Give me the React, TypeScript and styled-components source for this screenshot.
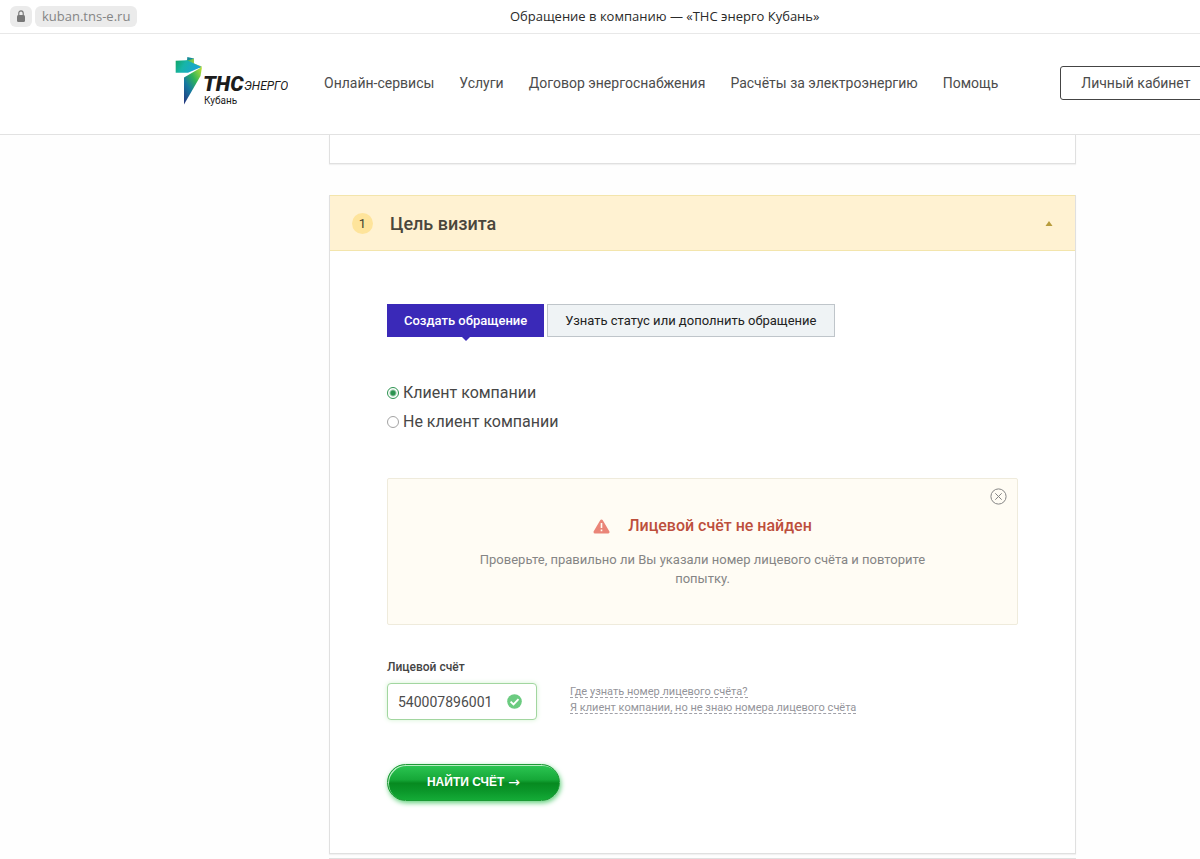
import React, { useState } from "react";
import styled, { createGlobalStyle, css } from "styled-components";

const GlobalStyle = createGlobalStyle`
  *, *::before, *::after { box-sizing: border-box; }
  body {
    margin: 0;
    background: #fefefe;
    color: #474747;
    font-family: Roboto, "Liberation Sans", sans-serif;
    font-size: 14px;
    overflow-x: hidden;
  }
  button, input { font-family: inherit; }
`;

const AddressBar = styled.div`
  display: flex;
  align-items: center;
  gap: 3px;
  height: 34px;
  padding: 0 8px 1px 10px;
  border-bottom: 1px solid #e8e8e8;
  background: #fff;
`;

const AddressChip = styled.span`
  display: flex;
  align-items: center;
  height: 21px;
  padding: 0 7px;
  border-radius: 6px;
  background: #ebebeb;
  color: #858585;
  font: 13px/21px "Open Sans", sans-serif;
`;

const PageTitle = styled.div`
  flex: 1;
  padding-right: 3px;
  text-align: center;
  color: #2a2a2a;
  font: 13px/20px "Open Sans", sans-serif;
`;

const Header = styled.header`
  display: flex;
  align-items: center;
  height: 101px;
  padding: 0 0 2px 175px;
  border-bottom: 1px solid #e2e2e2;
  background: #fff;
  overflow: hidden;
`;

const LogoLink = styled.a`
  flex: none;
  display: block;
  height: 52px;
  margin-right: 36px;
`;

const Nav = styled.nav`
  flex: none;
  display: flex;
  gap: 25px;
  margin-right: 62px;
`;

const NavLink = styled.a`
  color: #4c4c4c;
  font-size: 14px;
  line-height: 20px;
  text-decoration: none;
  white-space: nowrap;
`;

const AccountButton = styled.button`
  flex: none;
  height: 34px;
  padding: 0 20px;
  border: 1px solid #444;
  border-radius: 3px;
  background: #fff;
  color: #4c4c4c;
  font-size: 14px;
  white-space: nowrap;
`;

const Main = styled.main`
  padding: 0 124px 0 329px;
`;

const panel = css`
  border: 1px solid #e0e0e0;
  background: #fff;
  box-shadow: 0 1px 1px rgba(0, 0, 0, 0.05);
`;

const PreviousPanel = styled.div`
  ${panel}
  height: 29px;
  margin-bottom: 31px;
  border-top: 0;
`;

const StepCard = styled.section`
  ${panel}
  margin-bottom: 4px;
  border-top: 0;
`;

const NextPanel = styled.div`
  border-top: 1px solid #e0e0e0;
`;

const StepHeader = styled.button`
  display: flex;
  align-items: center;
  width: 100%;
  height: 56px;
  padding: 0 22px;
  border: 0;
  border-top: 1px solid #f3e5ac;
  border-bottom: 1px solid #f3e5ac;
  background: #fff2d2;
  text-align: left;
`;

const StepNumber = styled.span`
  width: 21px;
  height: 21px;
  margin-right: 17px;
  border-radius: 50%;
  background: #fee49b;
  color: #443f2f;
  font-size: 13px;
  line-height: 21px;
  text-align: center;
`;

const StepTitle = styled.span`
  flex: 1;
  padding-top: 2px;
  color: #4a463c;
  font-size: 18px;
  font-weight: 500;
  line-height: 24px;
`;

const StepBody = styled.form`
  padding: 53px 57px 52px;
`;

const Tabs = styled.div`
  display: flex;
  gap: 3px;
  margin-bottom: 46px;
`;

const Tab = styled.button<{ $active?: boolean }>`
  position: relative;
  height: 33px;
  padding: 0 17px;
  border: 1px solid #bfc5ca;
  background: #eff3f5;
  color: #222;
  font-size: 13px;
  white-space: nowrap;
  ${(p) =>
    p.$active &&
    css`
      padding: 0 16px;
      border-color: #3a29b8;
      background: #3a29b8;
      color: #fff;
      font-weight: 500;
      &::after {
        content: "";
        position: absolute;
        top: 100%;
        left: 50%;
        margin-left: -5px;
        border: 5px solid transparent;
        border-top-color: #3a29b8;
        border-bottom: 0;
      }
    `}
`;

const RadioList = styled.div`
  display: flex;
  flex-direction: column;
  gap: 9px;
  margin-bottom: 46px;
`;

const RadioLabel = styled.label`
  display: flex;
  align-items: center;
  gap: 4px;
  font-size: 16px;
  line-height: 20px;
`;

const Radio = styled.input`
  appearance: none;
  width: 12px;
  height: 12px;
  margin: 0;
  border: 1px solid #a3a3a3;
  border-radius: 50%;
  background: #fff;
  &:checked {
    border-color: #2c9350;
    background: radial-gradient(circle, #2c9350 0 2px, #fff 4px);
  }
`;

const Alert = styled.div`
  position: relative;
  height: 147px;
  margin-bottom: 33px;
  padding: 36px 84px 0;
  border: 1px solid #efebdc;
  border-radius: 2px;
  background: #fffcf4;
  text-align: center;
`;

const AlertClose = styled.button`
  position: absolute;
  top: 9px;
  right: 10px;
  width: 17px;
  height: 17px;
  padding: 0;
  border: 0;
  background: none;
  svg { display: block; }
`;

const AlertTitle = styled.h2`
  display: flex;
  align-items: center;
  justify-content: center;
  gap: 18px;
  margin: 0 0 13px;
  color: #bd4f3c;
  font-size: 16px;
  font-weight: 500;
  line-height: 22px;
`;

const AlertText = styled.p`
  margin: 0;
  color: #858585;
  font-size: 13px;
  line-height: 19px;
`;

const FieldLabel = styled.label`
  display: block;
  margin-bottom: 6px;
  color: #444;
  font-size: 12px;
  font-weight: 500;
  line-height: 19px;
`;

const FieldRow = styled.div`
  display: flex;
  align-items: center;
  gap: 33px;
  margin-bottom: 44px;
`;

const AccountBox = styled.div`
  display: flex;
  align-items: center;
  width: 150px;
  height: 37px;
  padding: 0 14px 0 10px;
  border: 1px solid #a2d6a0;
  border-radius: 4px;
  background: #fff;
  box-shadow: 0 0 5px #d5f3d3;
`;

const AccountInput = styled.input`
  flex: 1;
  min-width: 0;
  padding: 0;
  border: 0;
  outline: 0;
  background: none;
  color: #4c4c4c;
  font-size: 14px;
`;

const Hints = styled.div`
  display: flex;
  flex-direction: column;
  align-items: flex-start;
  gap: 3px;
  padding-bottom: 4px;
`;

const HintLink = styled.a`
  height: 13px;
  border-bottom: 1px dashed #a0a0a8;
  color: #94949a;
  font-size: 11px;
  line-height: 13px;
  text-decoration: none;
`;

const SubmitButton = styled.button`
  display: flex;
  align-items: center;
  justify-content: center;
  gap: 4px;
  height: 37px;
  width: 173px;
  padding: 0 0 2px;
  border: 1px solid #1c9a35;
  border-radius: 19px;
  background: linear-gradient(#2cc653, #16a838 42%, #078a20 52%, #0b972a 75%, #14ab37);
  box-shadow: inset 1px 1px 0 #b4ecc0, 1px 2px 5px #62d07c;
  color: #fff;
  font: bold 12px/16px "Liberation Sans", sans-serif;
`;

const SubmitArrow = styled.span`
  font: 14px/16px "DejaVu Sans", sans-serif;
`;

const LockIcon = () => (
  <svg width="8" height="12" viewBox="0 0 9 12" preserveAspectRatio="none" aria-hidden="true">
    <rect x="0" y="5" width="9" height="7" rx="1.5" fill="#777" />
    <path d="M2 5V3.300a2.500 2.500 0 0 1 5 0V5" fill="none" stroke="#777" strokeWidth="1.300" />
  </svg>
);

const Logo = () => (
  <svg width="113" height="52" viewBox="0 0 113 52" role="img" aria-label="ТНС энерго Кубань">
    <defs>
      <linearGradient id="ribbon" x1="0" y1="0" x2="1" y2="0.300">
        <stop offset="0" stopColor="#12a566" />
        <stop offset="0.400" stopColor="#17b5a8" />
        <stop offset="1" stopColor="#1ba2d8" />
      </linearGradient>
      <linearGradient id="fold" x1="0" y1="0" x2="1" y2="0">
        <stop offset="0" stopColor="#17ad6a" />
        <stop offset="0.500" stopColor="#8ccc48" />
        <stop offset="1" stopColor="#c6df3c" />
      </linearGradient>
      <linearGradient id="tail" x1="0.900" y1="0" x2="0.100" y2="1">
        <stop offset="0" stopColor="#b6dc35" />
        <stop offset="0.350" stopColor="#2fb457" />
        <stop offset="0.650" stopColor="#1579a0" />
        <stop offset="1" stopColor="#253a80" />
      </linearGradient>
    </defs>
    <path d="M12.300 0L19 1.500V5L12 4z" fill="#168c98" />
    <path d="M10 4L19 1.800V6.500L27 9.500L25 11.500z" fill="url(#fold)" />
    <path d="M0.700 3.800L12 3.200L26.500 10L13 15.800H0.700z" fill="url(#ribbon)" />
    <path d="M27 10L25.500 19L9 47.500V20.500z" fill="url(#tail)" />
    <g fill="#1c1c1c" fontFamily="Roboto, sans-serif">
      <text x="28" y="34" fontSize="21" fontWeight="900" fontStyle="italic">ТНС</text>
      <text x="69" y="33" fontSize="12" fontStyle="italic">ЭНЕРГО</text>
      <text x="29" y="47" fontSize="10">Кубань</text>
    </g>
  </svg>
);

const CloseIcon = () => (
  <svg width="17" height="17" viewBox="0 0 17 17" fill="none" stroke="#858585" aria-hidden="true">
    <circle cx="8.500" cy="8.500" r="7.600" />
    <path d="M5.300 5.300l6.400 6.400M11.700 5.300l-6.400 6.400" />
  </svg>
);

const WarningIcon = () => (
  <svg width="17" height="15" viewBox="0 0 17 15" aria-hidden="true">
    <path d="M8.500 2L15 13H2z" fill="#ea8578" stroke="#ea8578" strokeWidth="3" strokeLinejoin="round" />
    <path d="M8.500 4v5M8.500 10.500v1.800" stroke="#fffcf4" strokeWidth="1.600" />
  </svg>
);

const CheckIcon = () => (
  <svg width="15" height="15" viewBox="0 0 15 15" aria-hidden="true">
    <circle cx="7.500" cy="7.500" r="7.300" fill="#6bcb80" />
    <path d="M3.600 7.600l2.900 2.800 5-5.300" fill="none" stroke="#fff" strokeWidth="1.900" />
  </svg>
);

const ArrowUpIcon = () => (
  <svg width="8" height="5" viewBox="0 0 8 5" aria-hidden="true">
    <path d="M4 0L7.500 5H0.500z" fill="#b89c3c" />
  </svg>
);

const navItems = [
  "Онлайн-сервисы",
  "Услуги",
  "Договор энергоснабжения",
  "Расчёты за электроэнергию",
  "Помощь",
];

export default function App() {
  const [isClient, setIsClient] = useState(true);
  const [account, setAccount] = useState("540007896001");

  return (
    <>
      <GlobalStyle />
      <AddressBar>
        <AddressChip><LockIcon /></AddressChip>
        <AddressChip>kuban.tns-e.ru</AddressChip>
        <PageTitle>Обращение в компанию — «ТНС энерго Кубань»</PageTitle>
      </AddressBar>
      <Header>
        <LogoLink href="#"><Logo /></LogoLink>
        <Nav>
          {navItems.map((item) => (
            <NavLink href="#" key={item}>{item}</NavLink>
          ))}
        </Nav>
        <AccountButton type="button">Личный кабинет</AccountButton>
      </Header>
      <Main>
        <PreviousPanel />
        <StepCard>
          <StepHeader type="button" aria-expanded="true">
            <StepNumber>1</StepNumber>
            <StepTitle>Цель визита</StepTitle>
            <ArrowUpIcon />
          </StepHeader>
          <StepBody onSubmit={(e) => e.preventDefault()}>
            <Tabs>
              <Tab type="button" $active>Создать обращение</Tab>
              <Tab type="button">Узнать статус или дополнить обращение</Tab>
            </Tabs>
            <RadioList>
              <RadioLabel>
                <Radio type="radio" name="client" checked={isClient} onChange={() => setIsClient(true)} />
                Клиент компании
              </RadioLabel>
              <RadioLabel>
                <Radio type="radio" name="client" checked={!isClient} onChange={() => setIsClient(false)} />
                Не клиент компании
              </RadioLabel>
            </RadioList>
            <Alert role="alert">
              <AlertClose type="button" aria-label="Закрыть"><CloseIcon /></AlertClose>
              <AlertTitle><WarningIcon />Лицевой счёт не найден</AlertTitle>
              <AlertText>
                Проверьте, правильно ли Вы указали номер лицевого счёта и повторите попытку.
              </AlertText>
            </Alert>
            <FieldLabel htmlFor="account">Лицевой счёт</FieldLabel>
            <FieldRow>
              <AccountBox>
                <AccountInput id="account" value={account} onChange={(e) => setAccount(e.target.value)} />
                <CheckIcon />
              </AccountBox>
              <Hints>
                <HintLink href="#">Где узнать номер лицевого счёта?</HintLink>
                <HintLink href="#">Я клиент компании, но не знаю номера лицевого счёта</HintLink>
              </Hints>
            </FieldRow>
            <SubmitButton type="submit">НАЙТИ СЧЁТ<SubmitArrow>→</SubmitArrow></SubmitButton>
          </StepBody>
        </StepCard>
        <NextPanel />
      </Main>
    </>
  );
}
